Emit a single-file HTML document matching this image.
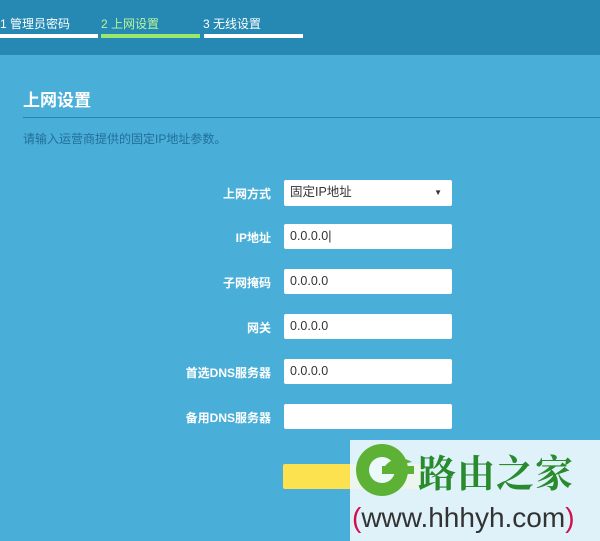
<!DOCTYPE html><html><head><meta charset="utf-8"><style>
body{margin:0;width:600px;height:541px;overflow:hidden;background:#49afd8;font-family:"Liberation Sans","Noto Sans CJK SC",sans-serif;position:relative}
.hd{position:absolute;left:0;top:0;width:600px;height:55px;background:#2589b3}
.st{position:absolute;top:15px;font-size:12px;color:#fff}
.bar{position:absolute;top:34px;height:4px;background:#fff}
h1{position:absolute;left:23px;top:86px;margin:0;font-size:17px;color:#fff;font-weight:bold}
.hr{position:absolute;left:23px;top:117px;width:577px;height:1px;background:#2a84b0}
.ds{position:absolute;left:23px;top:130px;font-size:12px;color:#236e99}
.lb{position:absolute;right:329px;font-size:12px;font-weight:bold;color:#fff;text-align:right}
.in{position:absolute;left:284px;width:168px;height:25px;background:#fff;border-radius:2px;font-size:12.5px;color:#333;line-height:25px;padding-left:6px;box-sizing:border-box}
.wm{position:absolute;left:350px;top:440px;width:250px;height:101px;background:rgba(235,248,252,.93)}
</style></head><body>
<div class="hd"></div>
<div class="st" style="left:0">1 管理员密码</div>
<div class="st" style="left:101px;color:#b8f59a">2 上网设置</div>
<div class="st" style="left:203px">3 无线设置</div>
<div class="bar" style="left:0;width:98px"></div>
<div class="bar" style="left:101px;width:99px;background:#9be86f"></div>
<div class="bar" style="left:204px;width:99px"></div>
<h1>上网设置</h1><div class="hr"></div>
<div class="ds">请输入运营商提供的固定IP地址参数。</div>
<div class="lb" style="top:185px">上网方式</div>
<div class="in" style="top:180px;height:26px">固定IP地址<span style="position:absolute;right:10px;font-size:8px">▼</span></div>
<div class="lb" style="top:229px">IP地址</div><div class="in" style="top:224px">0.0.0.0|</div>
<div class="lb" style="top:274px">子网掩码</div><div class="in" style="top:269px">0.0.0.0</div>
<div class="lb" style="top:319px">网关</div><div class="in" style="top:314px">0.0.0.0</div>
<div class="lb" style="top:364px">首选DNS服务器</div><div class="in" style="top:359px">0.0.0.0</div>
<div class="lb" style="top:409px">备用DNS服务器</div><div class="in" style="top:404px"></div>
<div style="position:absolute;left:283px;top:464px;width:140px;height:25px;background:#fde24f;border-radius:2px"></div>
<div class="wm"></div>
<svg style="position:absolute;left:352px;top:442px" width="64" height="56"><circle cx="30" cy="28" r="26" fill="#5db236"/><circle cx="30" cy="28" r="13" fill="#ebf8fc"/><rect x="30" y="24" width="32" height="8" fill="#5db236"/><path d="M30 28 Q42 10 60 20 Q48 22 40 28Z" fill="#5db236"/></svg>
<div style="position:absolute;left:418px;top:443px;font-size:38px;color:#2a8a2e;font-weight:bold;letter-spacing:1px;font-family:'Noto Serif CJK SC',serif">路由之家</div>
<div style="position:absolute;left:352px;top:502px;font-size:28px;color:#333;white-space:nowrap"><span style="color:#d0104c">(</span>www.hhhyh.com<span style="color:#d0104c">)</span></div>
</body></html>
